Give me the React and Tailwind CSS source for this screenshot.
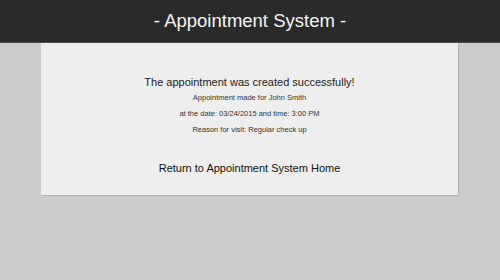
export default function App() {
  return (
    <div className="min-h-[280px] bg-[#cccccc] font-['Liberation_Sans',Arial,sans-serif]">
      <header className="h-[43px] bg-[#2a2a2a] border-b border-[#4a4a4a] flex items-center justify-center">
        <h1 className="text-[18.5px] text-[#f4f4f4] leading-none">- Appointment System -</h1>
      </header>
      <main className="mx-[41px] w-[417px] h-[152px] bg-[#eeeeee] shadow-[1px_1px_1px_rgba(0,0,0,0.12)] flex flex-col items-center text-[#222]">
        <h3 className="mt-[31px] text-[11px] leading-[16px]">The appointment was created successfully!</h3>
        <p className="text-[7.5px] leading-[16px] text-[#333]">Appointment made for John Smith</p>
        <p className="text-[7.5px] leading-[16px] text-[#333]">at the date: 03/24/2015 and time: 3:00 PM</p>
        <p className="text-[7.5px] leading-[16px] text-[#333]">Reason for visit: Regular check up</p>
        <a className="mt-[22px] text-[11px] leading-[16px] text-[#111]">Return to Appointment System Home</a>
      </main>
    </div>
  );
}
